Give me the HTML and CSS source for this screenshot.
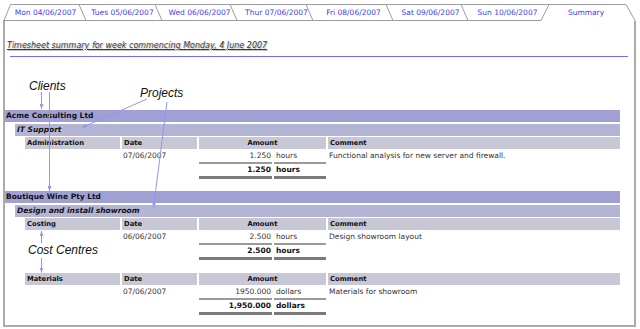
FILE: index.html
```html
<!DOCTYPE html>
<html lang="en">
<head>
<meta charset="UTF-8" />
<meta name="viewport" content="width=device-width, initial-scale=1.0">
<title>Timesheet summary</title>
<link rel="stylesheet" href="styles.css">
</head>
<body>

<div class="page">
  <!-- Day tabs -->
  <nav class="tabs">
    <svg class="tab-lines" width="640" height="17" viewBox="0 0 640 17">
      <g fill="none" stroke="#9c9c9c" stroke-width="1">
        <path d="M3 16.5 H541" />
        <path d="M4 16.5 L10.5 0.5 H626 L635 16.5 V17" />
        <path d="M79 0.5 L86 16.5 M155 0.5 L162 16.5 M230 0.5 L237 16.5 M306 0.5 L313 16.5 M386 0.5 L393 16.5 M461 0.5 L468 16.5" />
        <path d="M541 16.5 L549 0.5" />
      </g>
    </svg>
    <a class="tab">Mon 04/06/2007</a>
    <a class="tab">Tues 05/06/2007</a>
    <a class="tab">Wed 06/06/2007</a>
    <a class="tab">Thur 07/06/2007</a>
    <a class="tab">Fri 08/06/2007</a>
    <a class="tab">Sat 09/06/2007</a>
    <a class="tab">Sun 10/06/2007</a>
    <a class="tab active">Summary</a>
  </nav>

  <div class="panel">
    <h1 class="title">Timesheet summary for week commencing Monday, 4 June 2007</h1>
    <div class="rule"></div>

    <div class="report">
      <div class="client">Acme Consulting Ltd</div>
      <div class="project">IT Support</div>
      <div class="centre">
        <div class="hd">Administration</div>
        <div class="hd">Date</div>
        <div class="hd amount">Amount</div>
        <div class="hd">Comment</div>

        <div class="date">07/06/2007</div>
        <div class="num">1.250</div>
        <div class="unit">hours</div>
        <div class="comment">Functional analysis for new server and firewall.</div>

        <div class="num total">1.250</div>
        <div class="unit total">hours</div>
      </div>

      <div class="client next">Boutique Wine Pty Ltd</div>
      <div class="project">Design and install showroom</div>
      <div class="centre">
        <div class="hd">Costing</div>
        <div class="hd">Date</div>
        <div class="hd amount">Amount</div>
        <div class="hd">Comment</div>

        <div class="date">06/06/2007</div>
        <div class="num">2.500</div>
        <div class="unit">hours</div>
        <div class="comment">Design showroom layout</div>

        <div class="num total">2.500</div>
        <div class="unit total">hours</div>
      </div>
      <div class="centre next">
        <div class="hd">Materials</div>
        <div class="hd">Date</div>
        <div class="hd amount">Amount</div>
        <div class="hd">Comment</div>

        <div class="date">07/06/2007</div>
        <div class="num">1950.000</div>
        <div class="unit">dollars</div>
        <div class="comment">Materials for showroom</div>

        <div class="num total">1,950.000</div>
        <div class="unit total">dollars</div>
      </div>
    </div>
  </div>

  <!-- Callout annotations drawn over the report -->
  <div class="notes">
    <svg width="640" height="329" viewBox="0 0 640 329">
      <defs>
        <marker id="tip" markerWidth="5" markerHeight="4" refX="5" refY="2" orient="auto" markerUnits="userSpaceOnUse">
          <path d="M0 0 L5 2 L0 4 z" fill="#9494ff" />
        </marker>
      </defs>
      <g stroke="#9494ff" stroke-width="1" fill="none" marker-end="url(#tip)">
        <path d="M41.5 92 V109" />
        <path d="M49.5 92 V191" />
        <path d="M147 99 L82 127.5" />
        <path d="M167 102 L153.5 207.5" />
        <path d="M41.5 243 V231" />
        <path d="M41.5 258 V272.5" />
      </g>
    </svg>
    <span class="label clients">Clients</span>
    <span class="label projects">Projects</span>
    <span class="label centres">Cost Centres</span>
  </div>
</div>

</body>
</html>
```

FILE: styles.css
```css
/* Base styles */
body {
  margin: 0;
  background: #fff;
  font-family: "DejaVu Sans", Verdana, sans-serif;
  color: #333;
}

.page {
  position: relative;
  width: 640px;
  height: 329px;
  padding-top: 4px;
  box-sizing: border-box;
}

/* Tabs */
.tabs {
  position: relative;
  display: flex;
  height: 17px;
  padding-left: 7px;
}

.tab-lines {
  position: absolute;
  left: 0;
  top: 0;
}

.tab {
  position: relative;
  width: 77px;
  padding-top: 1px;
  text-align: center;
  font-size: 7.5px;
  line-height: 16px;
  color: #3c3cf2;
  text-decoration: none;
}

.tab.active {
  width: 80px;
}

/* Panel */
.panel {
  width: 633px;
  height: 306px;
  margin-left: 3px;
  box-sizing: border-box;
  border: 2px solid #ababab;
  border-top: none;
  padding-top: 19px;
}

.title {
  margin: 0;
  padding-left: 2px;
  font-size: 8px;
  font-style: italic;
  font-weight: normal;
  line-height: 12px;
  color: #3a3a3a;
  text-decoration: underline;
  text-shadow: 1px 1px 0 #c4c4c4;
}

.rule {
  height: 1px;
  margin: 4px 6px 0 5px;
  background: #6b6bff;
}

/* Report */
.report {
  margin: 53px 14px 0 0;
}

.client {
  height: 12px;
  padding-left: 1px;
  background: #a0a0d4;
  font-size: 7.5px;
  font-weight: bold;
  line-height: 12px;
  color: #111;
}

.client.next {
  margin-top: 12px;
}

.project {
  margin: 2px 0 1px 10px;
  padding-left: 2px;
  background: #b4b4d4;
  font-size: 7.5px;
  font-weight: bold;
  font-style: italic;
  line-height: 12px;
  color: #111;
}

.centre {
  display: grid;
  grid-template-columns: 95px 75px 73px 52px 1fr;
  column-gap: 2px;
  margin-left: 20px;
  font-size: 7.5px;
  line-height: 13px;
}

.centre.next {
  margin-top: 13px;
}

.hd {
  padding-left: 2px;
  background: #c7c7d6;
  font-size: 6.8px;
  font-weight: bold;
  line-height: 12px;
  color: #111;
}

.hd.amount {
  grid-column: 3 / 5;
  padding-left: 0;
  text-align: center;
}

.date {
  grid-column: 2;
  padding-left: 1px;
}

.num {
  padding-right: 1px;
  text-align: right;
}

.unit {
  padding-left: 2px;
}

.comment {
  padding-left: 1px;
}

.total {
  border-top: 2px solid #9a9a9a;
  border-bottom: 3px solid #7a7a7a;
  font-weight: bold;
  line-height: 12px;
  color: #111;
}

.num.total {
  grid-column: 3;
}

/* Annotations */
.notes {
  position: absolute;
  left: 0;
  top: 0;
  width: 640px;
  height: 329px;
  pointer-events: none;
}

.notes svg {
  position: absolute;
  left: 0;
  top: 0;
}

.label {
  position: absolute;
  font-family: "Liberation Sans", Arial, sans-serif;
  font-size: 12px;
  font-style: italic;
  line-height: 12px;
  color: #111;
}

.clients { left: 29px; top: 80px; }
.projects { left: 140px; top: 87px; }
.centres { left: 28px; top: 244px; }
```
